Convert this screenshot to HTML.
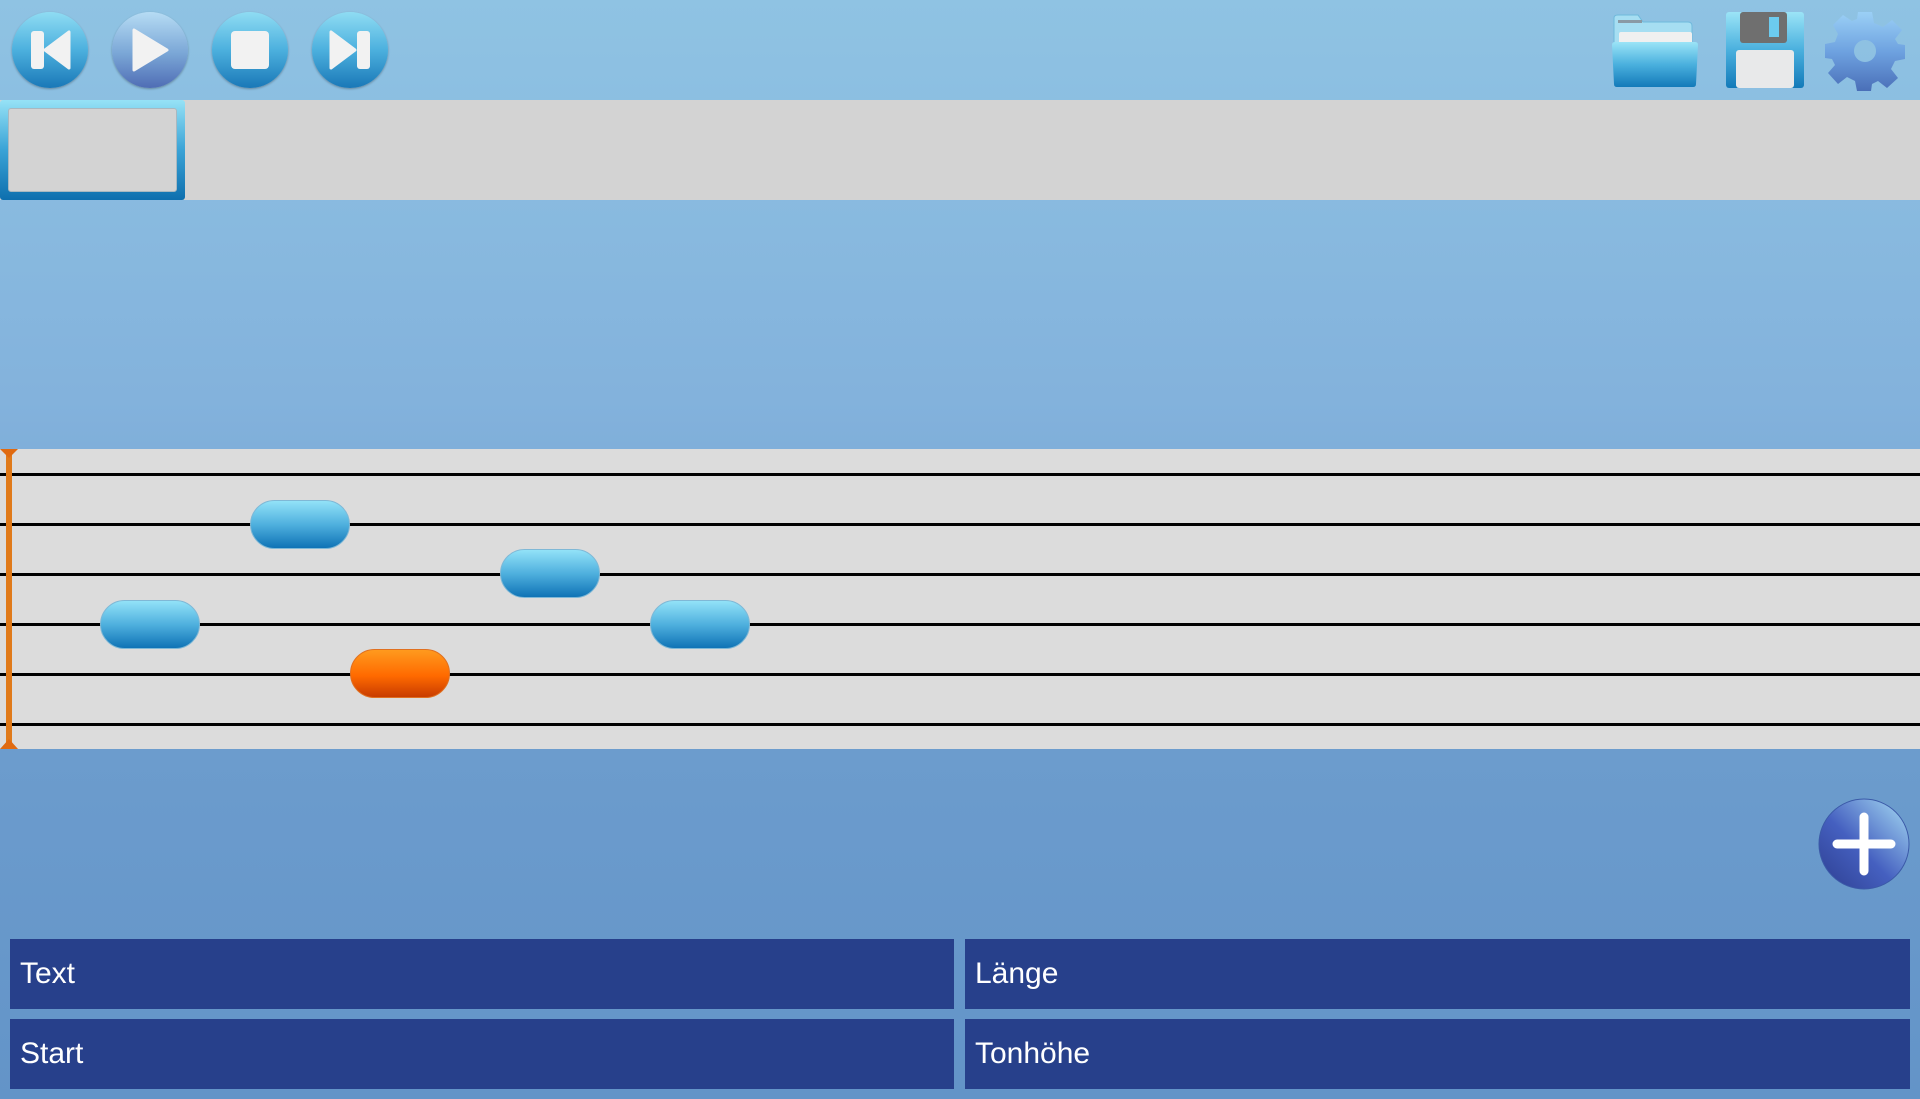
<!DOCTYPE html>
<html><head><meta charset="utf-8"><style>
*{margin:0;padding:0;box-sizing:border-box}
body{width:1920px;height:1099px;overflow:hidden;position:relative;font-family:"Liberation Sans",sans-serif;background:linear-gradient(#8fc3e3 0px,#83b2dc 400px,#6c9ccd 750px,#6394c8 1099px)}
.abs{position:absolute}
.btn{position:absolute;top:12px;width:76px;height:76px;border-radius:50%;background:linear-gradient(#8fdcf3,#4cb0de 50%,#1a78b8);box-shadow:0 1px 2px rgba(0,0,0,.3)}
.btn.play{background:linear-gradient(#b6dcf4,#7aa6d6 55%,#4f6db5)}
.bar{left:0;top:100px;width:1920px;height:100px;background:#d3d3d3}
.sel{left:0;top:100px;width:185px;height:100px;border-radius:3px;background:linear-gradient(#96e2f6,#3aa3d6 50%,#0e6fae)}
.sel div{position:absolute;left:8px;top:8px;right:8px;bottom:8px;background:#d3d3d3;border-radius:3px;border:1px solid #a9b8c0}
.staff{left:0;top:449px;width:1920px;height:300px;background:#dcdcdc}
.line{position:absolute;left:0;width:1920px;height:3px;background:#000}
.note{position:absolute;width:100px;height:49px;border-radius:25px;background:linear-gradient(#92e2f8,#4fb0de 50%,#0f73b6);border:1px solid #7fb8d6}
.note.o{background:linear-gradient(#ff9a1e,#ff6a00 55%,#c83c00);border-color:#e07020}
.field{position:absolute;height:70px;background:#27408b;color:#fff;font-size:30px;padding-left:10px;line-height:70px}
</style></head><body>
<div class="btn" style="left:12px"><svg width="76" height="76" viewBox="0 0 76 76"><rect x="19" y="19" width="13" height="38" rx="3" fill="#f2f2f2"/><path d="M57 20 L57 56 L33 38 Z" fill="#f2f2f2" stroke="#f2f2f2" stroke-width="3" stroke-linejoin="round"/></svg></div>
<div class="btn play" style="left:112px"><svg width="76" height="76" viewBox="0 0 76 76"><path d="M22 18 L22 58 L55 38 Z" fill="#f2f2f2" stroke="#f2f2f2" stroke-width="3" stroke-linejoin="round"/></svg></div>
<div class="btn" style="left:212px"><svg width="76" height="76" viewBox="0 0 76 76"><rect x="19" y="19" width="38" height="38" rx="4" fill="#f2f2f2"/></svg></div>
<div class="btn" style="left:312px"><svg width="76" height="76" viewBox="0 0 76 76"><path d="M19 20 L19 56 L43 38 Z" fill="#f2f2f2" stroke="#f2f2f2" stroke-width="3" stroke-linejoin="round"/><rect x="45" y="19" width="13" height="38" rx="3" fill="#f2f2f2"/></svg></div>

<svg class="abs" style="left:1610px;top:10px" width="90" height="80" viewBox="0 0 90 80"><defs><linearGradient id="f" x1="0" y1="0" x2="0" y2="1"><stop offset="0" stop-color="#9be4f7"/><stop offset=".5" stop-color="#4ab0de"/><stop offset="1" stop-color="#137ab9"/></linearGradient></defs><path d="M4 8 Q4 5 8 5 L28 5 L33 12 L78 12 Q82 12 82 16 L82 40 L4 40 Z" fill="#a6def2" stroke="#6fb9dc" stroke-width="1"/><rect x="8" y="10" width="24" height="3" fill="#8a9aa5"/><rect x="9" y="22" width="73" height="24" rx="2" fill="#f0f0f0"/><path d="M2 35 Q2 32 5 32 L85 32 Q88 32 88 35 L86 74 Q86 77 83 77 L7 77 Q4 77 4 74 Z" fill="url(#f)"/></svg>
<svg class="abs" style="left:1725px;top:10px" width="80" height="80" viewBox="0 0 80 80"><rect x="1" y="2" width="78" height="76" rx="3" fill="url(#f)"/><rect x="15" y="2" width="47" height="31" rx="3" fill="#6f6f6f"/><rect x="44" y="7" width="10" height="20" fill="#6ccbef"/><rect x="11" y="40" width="58" height="38" rx="3" fill="#e8e9ea"/></svg>
<svg class="abs" style="left:1824px;top:10px" width="82" height="82" viewBox="-41 -41 82 82"><defs><linearGradient id="g" x1="0" y1="0" x2="0" y2="1"><stop offset="0" stop-color="#9bd0f6"/><stop offset=".5" stop-color="#6ea2e0"/><stop offset="1" stop-color="#4a6fb8"/></linearGradient></defs><path fill="url(#g)" fill-rule="evenodd" d="M-7 -39 L7 -39 L9 -28 L18 -24 L27 -31 L37 -21 L30 -12 L33 -7 L40 -6 L40 8 L30 10 L26 18 L33 27 L22 37 L13 30 L7 33 L6 40 L-8 40 L-10 30 L-18 26 L-27 33 L-37 22 L-30 14 L-33 8 L-40 7 L-40 -7 L-30 -9 L-27 -17 L-32 -26 L-22 -36 L-13 -30 L-8 -32 Z M0 -11 A11 11 0 1 0 0.01 -11 Z"/></svg>

<div class="abs bar"></div>
<div class="abs sel"><div></div></div>

<div class="abs staff">
<div class="line" style="top:24px"></div>
<div class="line" style="top:74px"></div>
<div class="line" style="top:124px"></div>
<div class="line" style="top:174px"></div>
<div class="line" style="top:224px"></div>
<div class="line" style="top:274px"></div>
<div class="abs" style="left:6px;top:0;width:6px;height:300px;background:#e07a1a"></div>
<svg class="abs" style="left:0;top:0" width="18" height="300"><path d="M0 0 L18 0 L9 9 Z M0 300 L18 300 L9 290 Z" fill="#e06a10"/></svg>
<div class="note" style="left:100px;top:151px"></div>
<div class="note" style="left:250px;top:51px"></div>
<div class="note o" style="left:350px;top:200px"></div>
<div class="note" style="left:500px;top:100px"></div>
<div class="note" style="left:650px;top:151px"></div>
</div>

<svg class="abs" style="left:1817px;top:797px" width="94" height="94" viewBox="0 0 94 94"><defs><linearGradient id="p" x1="1" y1="0" x2="0" y2="1"><stop offset="0" stop-color="#a8def5"/><stop offset=".55" stop-color="#4560c0"/><stop offset="1" stop-color="#2d3e90"/></linearGradient></defs><circle cx="47" cy="47" r="45" fill="url(#p)" stroke="#3b5aa8" stroke-width="1"/><path d="M47 20 L47 74 M20 47 L74 47" stroke="#fff" stroke-width="9" stroke-linecap="round"/></svg>

<div class="field" style="left:10px;top:939px;width:944px">Text</div>
<div class="field" style="left:965px;top:939px;width:945px">Länge</div>
<div class="field" style="left:10px;top:1019px;width:944px">Start</div>
<div class="field" style="left:965px;top:1019px;width:945px">Tonhöhe</div>
</body></html>
